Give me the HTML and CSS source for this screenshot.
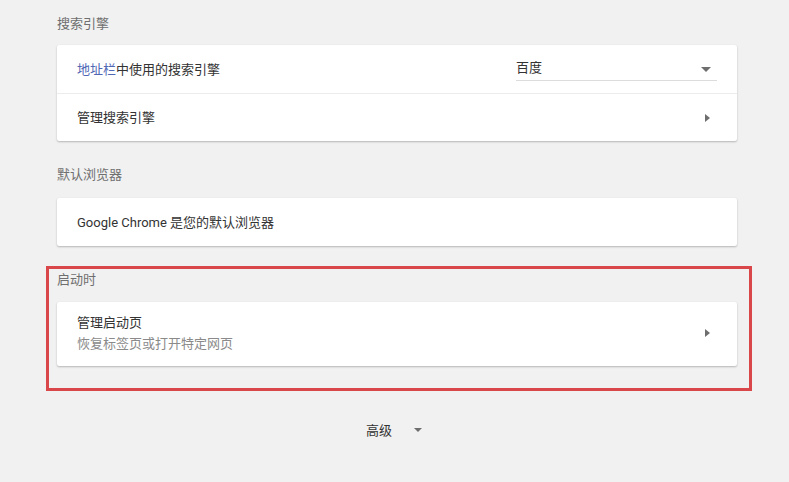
FILE: index.html
```html
<!DOCTYPE html>
<html lang="zh-CN">
<head>
<meta charset="utf-8">
<title>设置</title>
<link rel="stylesheet" href="styles.css">
</head>
<body>
<main class="page">
  <section class="section">
    <h2 class="section-title">搜索引擎</h2>
    <div class="card">
      <div class="row">
        <div class="row-label"><span class="link">地址栏</span>中使用的搜索引擎</div>
        <div class="select">
          <span class="select-value">百度</span>
          <span class="tri-down"></span>
        </div>
      </div>
      <div class="row row-divided">
        <div class="row-label">管理搜索引擎</div>
        <span class="tri-right"></span>
      </div>
    </div>
  </section>

  <section class="section section-spaced">
    <h2 class="section-title">默认浏览器</h2>
    <div class="card">
      <div class="row">
        <div class="row-label">Google Chrome 是您的默认浏览器</div>
      </div>
    </div>
  </section>

  <section class="section highlight">
    <h2 class="section-title section-title-compact">启动时</h2>
    <div class="card">
      <div class="row row-tall">
        <div class="row-text">
          <div class="row-label">管理启动页</div>
          <div class="row-sub">恢复标签页或打开特定网页</div>
        </div>
        <span class="tri-right"></span>
      </div>
    </div>
  </section>

  <div class="advanced">
    <span class="advanced-label">高级</span>
    <span class="tri-down tri-small"></span>
  </div>
</main>
</body>
</html>
```

FILE: styles.css
```css
* { box-sizing: border-box; }

html, body {
  margin: 0;
  padding: 0;
  background: #f1f1f1;
}

body {
  font-family: Roboto, "Noto Sans CJK SC", "Noto Sans", sans-serif;
  font-size: 13px;
  color: #333333;
}

.page {
  width: 680px;
  margin-left: 57px;
}

.section-title {
  margin: 0;
  height: 45px;
  display: flex;
  align-items: center;
  font-size: 13px;
  font-weight: 400;
  color: #6f6f6f;
}

.section-spaced { margin-top: 10px; }

.section-spaced .section-title { height: 47px; padding-bottom: 3px; }

.card {
  background: #ffffff;
  border-radius: 2px;
  box-shadow: 0 1px 2px rgba(0, 0, 0, 0.24), 0 0 1px rgba(0, 0, 0, 0.06);
}

.row {
  height: 48px;
  padding: 0 20px;
  display: flex;
  align-items: center;
  justify-content: space-between;
}

.row-divided { border-top: 1px solid #ececec; }

.row-tall {
  height: 64px;
  padding-top: 10px;
  padding-bottom: 12px;
}

.row-label { line-height: 21px; }

.link { color: #5068b4; }

.row-sub {
  line-height: 21px;
  color: #8a8a8a;
}

.select {
  width: 201px;
  height: 24px;
  margin-top: -1px;
  border-bottom: 1px solid #dcdcdc;
  display: flex;
  align-items: center;
  justify-content: space-between;
  padding-right: 6px;
}

.select-value { line-height: 22px; }

.tri-down {
  width: 0;
  height: 0;
  border-left: 5px solid transparent;
  border-right: 5px solid transparent;
  border-top: 5px solid #6e6e6e;
  margin-top: 2px;
}

.tri-right {
  width: 0;
  height: 0;
  border-top: 4.5px solid transparent;
  border-bottom: 4.5px solid transparent;
  border-left: 5px solid #6e6e6e;
  margin-right: 7px;
}

.highlight {
  margin-top: 20px;
  margin-left: -11px;
  width: 706px;
  border: 3px solid #d9474b;
  padding: 0 12px 22px 8px;
}

.section-title-compact {
  height: 33px;
  align-items: flex-start;
  line-height: 21px;
}

.advanced {
  margin-top: 14px;
  height: 48px;
  display: flex;
  align-items: center;
  justify-content: center;
  gap: 22px;
  padding-right: 6px;
}

.advanced-label { color: #333333; }

.tri-small {
  border-left-width: 4px;
  border-right-width: 4px;
  border-top-width: 4.5px;
  margin-top: 2px;
}
```
